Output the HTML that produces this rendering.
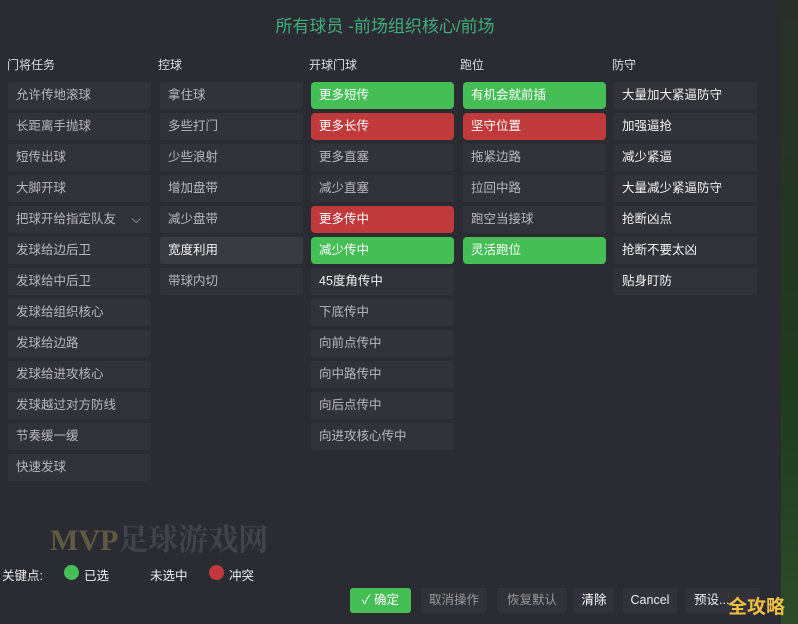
<!DOCTYPE html>
<html><head><meta charset="utf-8"><style>
html,body{margin:0;width:798px;height:624px;overflow:hidden}
body{background:#26262d;font-family:"Liberation Sans","Noto Sans CJK SC",sans-serif;position:relative}
.panel{position:absolute;left:0;top:0;width:781px;height:624px;background:#2b2b33;overflow:hidden}
.edge{position:absolute;left:781px;top:0;width:17px;height:624px;background:linear-gradient(#2a2e2a,#1f3a1f 60%,#2d4a2a)}
.title{position:absolute;top:12px;left:0;width:770px;text-align:center;color:#3fae7a;font-size:17px}
.h{position:absolute;top:56px;color:#ddd;font-size:12px}
.c{position:absolute;width:143px;height:27px;background:#32323a;color:#b8b8bc;font-size:12.5px;line-height:27px;box-sizing:border-box;padding-left:8px;border-radius:2px;white-space:nowrap}
.w{color:#f2f2f2}
.g{background:#45bf55;color:#fff;border-radius:4px}
.r{background:#c0393b;color:#fff;border-radius:4px}
.l{background:#3a3a42}
.b{position:absolute;top:588px;height:25px;line-height:25px;font-size:12.5px;color:#999;background:#32323a;text-align:center;border-radius:2px;white-space:nowrap}
.lg{position:absolute;top:565px;font-size:12.5px;color:#eee;white-space:nowrap}
</style></head><body>
<div class="panel">
<div class="title">所有球员 -前场组织核心/前场</div>
<div class="h" style="left:7px">门将任务</div>
<div class="h" style="left:158px">控球</div>
<div class="h" style="left:309px">开球门球</div>
<div class="h" style="left:460px">跑位</div>
<div class="h" style="left:612px">防守</div>

<div class="c" style="left:8px;top:82px">允许传地滚球</div>
<div class="c" style="left:8px;top:113px">长距离手抛球</div>
<div class="c" style="left:8px;top:144px">短传出球</div>
<div class="c" style="left:8px;top:175px">大脚开球</div>
<div class="c" style="left:8px;top:206px">把球开给指定队友<span style="position:absolute;right:10px">⌵</span></div>
<div class="c" style="left:8px;top:237px">发球给边后卫</div>
<div class="c" style="left:8px;top:268px">发球给中后卫</div>
<div class="c" style="left:8px;top:299px">发球给组织核心</div>
<div class="c" style="left:8px;top:330px">发球给边路</div>
<div class="c" style="left:8px;top:361px">发球给进攻核心</div>
<div class="c" style="left:8px;top:392px">发球越过对方防线</div>
<div class="c" style="left:8px;top:423px">节奏缓一缓</div>
<div class="c" style="left:8px;top:454px">快速发球</div>

<div class="c" style="left:160px;top:82px">拿住球</div>
<div class="c" style="left:160px;top:113px">多些打门</div>
<div class="c" style="left:160px;top:144px">少些浪射</div>
<div class="c" style="left:160px;top:175px">增加盘带</div>
<div class="c" style="left:160px;top:206px">减少盘带</div>
<div class="c l w" style="left:160px;top:237px">宽度利用</div>
<div class="c" style="left:160px;top:268px">带球内切</div>

<div class="c g" style="left:311px;top:82px">更多短传</div>
<div class="c r" style="left:311px;top:113px">更多长传</div>
<div class="c" style="left:311px;top:144px">更多直塞</div>
<div class="c" style="left:311px;top:175px">减少直塞</div>
<div class="c r" style="left:311px;top:206px">更多传中</div>
<div class="c g" style="left:311px;top:237px">减少传中</div>
<div class="c w" style="left:311px;top:268px">45度角传中</div>
<div class="c" style="left:311px;top:299px">下底传中</div>
<div class="c" style="left:311px;top:330px">向前点传中</div>
<div class="c" style="left:311px;top:361px">向中路传中</div>
<div class="c" style="left:311px;top:392px">向后点传中</div>
<div class="c" style="left:311px;top:423px">向进攻核心传中</div>

<div class="c g" style="left:463px;top:82px">有机会就前插</div>
<div class="c r" style="left:463px;top:113px">坚守位置</div>
<div class="c" style="left:463px;top:144px">拖紧边路</div>
<div class="c" style="left:463px;top:175px">拉回中路</div>
<div class="c" style="left:463px;top:206px">跑空当接球</div>
<div class="c g" style="left:463px;top:237px">灵活跑位</div>

<div class="c w" style="left:614px;top:82px">大量加大紧逼防守</div>
<div class="c w" style="left:614px;top:113px">加强逼抢</div>
<div class="c w" style="left:614px;top:144px">减少紧逼</div>
<div class="c w" style="left:614px;top:175px">大量减少紧逼防守</div>
<div class="c w" style="left:614px;top:206px">抢断凶点</div>
<div class="c w" style="left:614px;top:237px">抢断不要太凶</div>
<div class="c w" style="left:614px;top:268px">贴身盯防</div>

<div style="position:absolute;left:50px;top:515px;font-size:30px;font-weight:bold;color:#6e6648;font-family:'Liberation Serif','Noto Serif CJK SC',serif;opacity:.8;white-space:nowrap">MVP<span style="color:#4a4a52">足球游戏网</span></div>

<div class="lg" style="left:2px">关键点:</div>
<div style="position:absolute;left:64px;top:565px;width:15px;height:15px;border-radius:50%;background:#45bf55"></div>
<div class="lg" style="left:84px">已选</div>
<div class="lg" style="left:150px">未选中</div>
<div style="position:absolute;left:209px;top:565px;width:15px;height:15px;border-radius:50%;background:#c0393b"></div>
<div class="lg" style="left:229px">冲突</div>

<div class="b" style="left:350px;width:61px;background:#45bf55;color:#fff;border-radius:3px">✓ 确定</div>
<div class="b" style="left:421px;width:66px">取消操作</div>
<div class="b" style="left:497px;width:70px">恢复默认</div>
<div class="b" style="left:574px;width:40px;color:#fff">清除</div>
<div class="b" style="left:623px;width:54px;color:#eee">Cancel</div>
<div class="b" style="left:686px;width:74px;color:#eee;text-align:left;padding-left:8px;box-sizing:border-box">预设...</div>
</div>
<div class="edge"></div>
<div style="position:absolute;left:728px;top:592px;font-size:19px;font-weight:bold;color:#f0c040;white-space:nowrap">全攻略</div>
</body></html>
